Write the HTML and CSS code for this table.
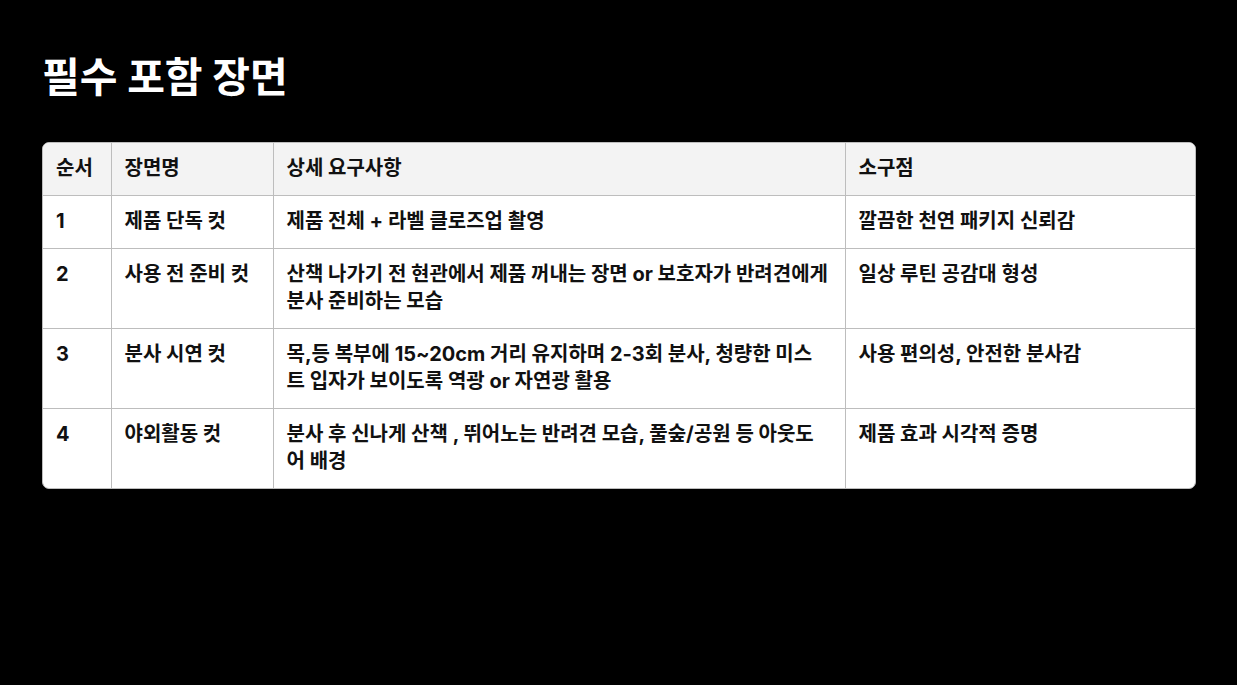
FILE: index.html
```html
<!DOCTYPE html>
<html lang="ko">
<head>
<meta charset="utf-8">
<link rel="stylesheet" href="styles.css">
</head>
<body>
<main class="page">
  <h1 class="title">필수 포함 장면</h1>
  <div class="table-wrap">
    <table class="scenes">
      <colgroup>
        <col class="c1"><col class="c2"><col class="c3"><col class="c4">
      </colgroup>
      <thead>
        <tr><th>순서</th><th>장면명</th><th>상세 요구사항</th><th>소구점</th></tr>
      </thead>
      <tbody>
        <tr><td>1</td><td>제품 단독 컷</td><td>제품 전체 + 라벨 클로즈업 촬영</td><td>깔끔한 천연 패키지 신뢰감</td></tr>
        <tr><td>2</td><td>사용 전 준비 컷</td><td>산책 나가기 전 현관에서 제품 꺼내는 장면 or 보호자가 반려견에게 분사 준비하는 모습</td><td>일상 루틴 공감대 형성</td></tr>
        <tr><td>3</td><td>분사 시연 컷</td><td>목,등 복부에 15~20cm 거리 유지하며 2-3회 분사, 청량한 미스트 입자가 보이도록 역광 or 자연광 활용</td><td>사용 편의성, 안전한 분사감</td></tr>
        <tr><td>4</td><td>야외활동 컷</td><td>분사 후 신나게 산책 , 뛰어노는 반려견 모습, 풀숲/공원 등 아웃도어 배경</td><td>제품 효과 시각적 증명</td></tr>
      </tbody>
    </table>
  </div>
</main>
</body>
</html>
```
FILE: styles.css
```css
html, body {
  margin: 0;
  background: #000;
}
body {
  font-family: "Inter", "Noto Sans CJK KR", "Noto Sans", sans-serif;
  color: #111;
}
.page {
  padding: 49px 42px 0 42px;
}
.title {
  margin: 0 0 37px 0;
  color: #fff;
  font-size: 41px;
  font-weight: 700;
  line-height: 56px;
}
.table-wrap {
  width: 1152px;
  background: #fff;
  border: 1px solid #bdbdbd;
  border-radius: 7px;
  overflow: hidden;
}
.scenes {
  width: 100%;
  border-collapse: collapse;
  table-layout: fixed;
}
.c1 { width: 68px; }
.c2 { width: 162px; }
.c3 { width: 572px; }
.c4 { width: auto; }
.scenes th, .scenes td {
  text-align: left;
  vertical-align: top;
  font-size: 20px;
  font-weight: 700;
  line-height: 27px;
  padding: 12px 15px 13px 13px;
  border-left: 1px solid #bdbdbd;
  border-top: 1px solid #bdbdbd;
}
.scenes th:first-child, .scenes td:first-child { border-left: none; }
.scenes thead th { border-top: none; background: #f3f3f3; }
```
